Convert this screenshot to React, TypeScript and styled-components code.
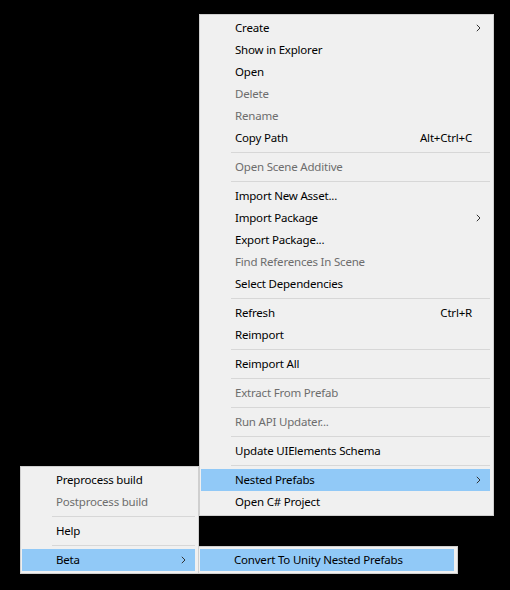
import React from 'react';
import styled, { createGlobalStyle } from 'styled-components';

const GlobalStyle = createGlobalStyle`
  html, body {
    margin: 0;
    padding: 0;
    background: #000000;
  }
`;

const Desktop = styled.div`
  position: relative;
  width: 510px;
  height: 590px;
  background: #000000;
  overflow: hidden;
  font-family: 'Noto Sans', 'Open Sans', sans-serif;
  font-size: 11.5px;
  letter-spacing: -0.2px;
`;

const MenuPanel = styled.div<{ $left: number; $top: number; $width: number }>`
  position: absolute;
  left: ${(p) => p.$left}px;
  top: ${(p) => p.$top}px;
  width: ${(p) => p.$width}px;
  box-sizing: border-box;
  background: #f0f0f0;
  border: 1px solid #cfcfcf;
  padding: 2px 3px 2px 1px;
  display: flex;
  flex-direction: column;
`;

const Row = styled.div<{ $disabled?: boolean; $active?: boolean }>`
  box-sizing: border-box;
  height: 22px;
  display: flex;
  align-items: center;
  padding: 0 9px 2px 34px;
  color: ${(p) => (p.$disabled ? '#6d6d6d' : '#000000')};
  background: ${(p) => (p.$active ? '#91c9f7' : 'transparent')};
  white-space: nowrap;
`;

const Label = styled.span`
  flex: 1;
`;

const Shortcut = styled.span`
  margin-right: 3px;
`;

const ArrowBox = styled.span`
  width: 6px;
  display: flex;
  justify-content: center;
  padding-top: 1px;
`;

const Separator = styled.div`
  height: 1px;
  background: #d7d7d7;
  margin: 3px 0 3px 30px;
`;

const Chevron = () => (
  <svg width="5" height="8" viewBox="0 0 5 8">
    <path d="M0.8 0.8 L4 4 L0.8 7.2" fill="none" stroke="#333" strokeWidth="1" />
  </svg>
);

type Entry =
  | { sep: true }
  | { label: string; disabled?: boolean; active?: boolean; shortcut?: string; sub?: boolean };

const mainItems: Entry[] = [
  { label: 'Create', sub: true },
  { label: 'Show in Explorer' },
  { label: 'Open' },
  { label: 'Delete', disabled: true },
  { label: 'Rename', disabled: true },
  { label: 'Copy Path', shortcut: 'Alt+Ctrl+C' },
  { sep: true },
  { label: 'Open Scene Additive', disabled: true },
  { sep: true },
  { label: 'Import New Asset...' },
  { label: 'Import Package', sub: true },
  { label: 'Export Package...' },
  { label: 'Find References In Scene', disabled: true },
  { label: 'Select Dependencies' },
  { sep: true },
  { label: 'Refresh', shortcut: 'Ctrl+R' },
  { label: 'Reimport' },
  { sep: true },
  { label: 'Reimport All' },
  { sep: true },
  { label: 'Extract From Prefab', disabled: true },
  { sep: true },
  { label: 'Run API Updater...', disabled: true },
  { sep: true },
  { label: 'Update UIElements Schema' },
  { sep: true },
  { label: 'Nested Prefabs', active: true, sub: true },
  { label: 'Open C# Project' },
];

const nestedItems: Entry[] = [
  { label: 'Preprocess build' },
  { label: 'Postprocess build', disabled: true },
  { sep: true },
  { label: 'Help' },
  { sep: true },
  { label: 'Beta', active: true, sub: true },
];

const betaItems: Entry[] = [{ label: 'Convert To Unity Nested Prefabs', active: true }];

const Menu: React.FC<{ items: Entry[]; left: number; top: number; width: number }> = ({
  items,
  left,
  top,
  width,
}) => (
  <MenuPanel $left={left} $top={top} $width={width}>
    {items.map((item, i) =>
      'sep' in item ? (
        <Separator key={i} />
      ) : (
        <Row key={i} $disabled={item.disabled} $active={item.active}>
          <Label>{item.label}</Label>
          {item.shortcut && <Shortcut>{item.shortcut}</Shortcut>}
          <ArrowBox>{item.sub && <Chevron />}</ArrowBox>
        </Row>
      )
    )}
  </MenuPanel>
);

export default function App() {
  return (
    <>
      <GlobalStyle />
      <Desktop>
        <Menu items={mainItems} left={199} top={14} width={295} />
        <Menu items={nestedItems} left={20} top={466} width={179} />
        <Menu items={betaItems} left={198} top={546} width={260} />
      </Desktop>
    </>
  );
}
